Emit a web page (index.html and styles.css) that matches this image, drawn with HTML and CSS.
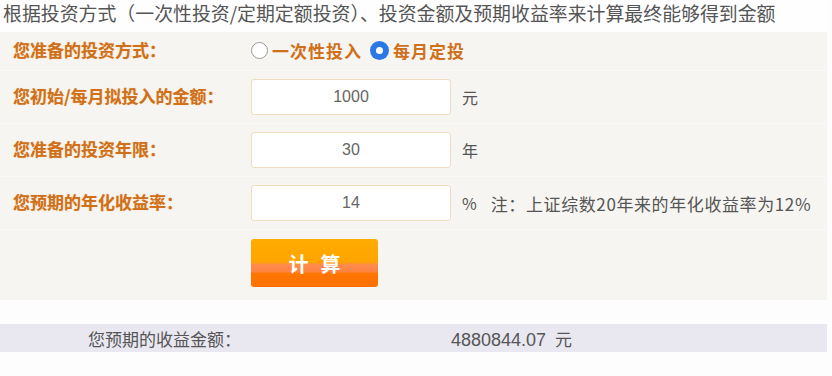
FILE: index.html
```html
<!DOCTYPE html>
<html lang="zh-CN">
<head>
<meta charset="utf-8">
<title>定投计算器</title>
<link rel="stylesheet" href="styles.css">
</head>
<body>
<div class="page">
  <p class="intro">根据投资方式（一次性投资/定期定额投资）、投资金额及预期收益率来计算最终能够得到金额</p>
  <div class="form">
    <div class="row row-mode">
      <div class="label">您准备的投资方式：</div>
      <div class="field">
        <span class="radio"></span><span class="opt">一次性投入</span>
        <span class="radio checked"></span><span class="opt">每月定投</span>
      </div>
    </div>
    <div class="row">
      <div class="label">您初始/每月拟投入的金额：</div>
      <div class="field"><div class="input">1000</div><span class="unit">元</span></div>
    </div>
    <div class="row">
      <div class="label">您准备的投资年限：</div>
      <div class="field"><div class="input">30</div><span class="unit">年</span></div>
    </div>
    <div class="row">
      <div class="label">您预期的年化收益率：</div>
      <div class="field"><div class="input">14</div><span class="unit">%</span><span class="note">注：上证综数20年来的年化收益率为12%</span></div>
    </div>
    <div class="row row-btn">
      <div class="label"></div>
      <div class="field"><button class="calc">计算</button></div>
    </div>
  </div>
  <div class="result">
    <div class="res-label">您预期的收益金额：</div>
    <div class="res-value">4880844.07<span class="res-unit">元</span></div>
  </div>
</div>
</body>
</html>
```
FILE: styles.css
```css
html, body {
  margin: 0;
  padding: 0;
  background: #fdfdfe;
}
body {
  font-family: "Noto Sans CJK SC", "Noto Sans", sans-serif;
  color: #555;
}
.page {
  width: 827px;
}
.intro {
  margin: 0;
  height: 31px;
  padding: 1px 0 0 3px;
  font-size: 18.9px;
  line-height: 24px;
  color: #555;
  white-space: nowrap;
  background: #fefefe;
}
.form {
  background: #f7f5f2;
  height: 268px;
}
.row {
  display: grid;
  grid-template-columns: 251px 1fr;
  align-items: center;
  height: 53px;
  border-bottom: 1px solid #faf9f7;
  box-sizing: border-box;
}
.row-mode {
  height: 39px;
}
.row-btn {
  height: 70px;
  align-items: start;
  border-bottom: none;
}
.row .label {
  padding-bottom: 3px;
}
.label {
  padding-left: 13px;
  font-size: 17px;
  font-weight: 700;
  color: #d0701a;
  white-space: nowrap;
  text-shadow: 0 0 1px rgba(230, 150, 60, 0.5);
}
.field {
  display: flex;
  align-items: center;
  white-space: nowrap;
}
.row-mode .field {
  padding-bottom: 2px;
}
.radio {
  width: 17px;
  height: 17px;
  border-radius: 50%;
  border: 1px solid #9a9a9a;
  background: #fff;
  box-sizing: border-box;
  margin-right: 4px;
  position: relative;
}
.radio.checked {
  width: 19px;
  height: 19px;
  border: none;
  background: #2b78e4;
  margin-left: 8px;
}
.radio.checked::after {
  content: "";
  position: absolute;
  left: 6px;
  top: 6px;
  width: 7px;
  height: 7px;
  border-radius: 50%;
  background: #fff;
}
.opt {
  font-size: 17px;
  font-weight: 700;
  color: #d0701a;
  letter-spacing: 1px;
}
.input {
  width: 200px;
  height: 36px;
  box-sizing: border-box;
  border: 1px solid #f0dcc0;
  border-radius: 3px;
  background: #fff;
  text-align: center;
  line-height: 34px;
  font-family: "Liberation Sans", Arial, sans-serif;
  font-size: 16px;
  color: #666;
}
.unit {
  margin-left: 11px;
  font-size: 16px;
  color: #555;
}
.note {
  margin-left: 14px;
  font-size: 17px;
  letter-spacing: 0.6px;
  color: #555;
}
.calc {
  margin-top: 9px;
  width: 127px;
  height: 48px;
  border: none;
  border-radius: 3px;
  background: linear-gradient(to bottom, #ffac00 0%, #ffa400 48%, #ff8a50 54%, #ff8340 68%, #ff7600 72%, #ff7000 100%);
  color: #fff;
  font-family: "Noto Sans CJK SC", sans-serif;
  font-size: 20px;
  font-weight: 700;
  letter-spacing: 12px;
  padding: 0 0 0 12px;
}
.result {
  margin-top: 24px;
  height: 28px;
  background: #e9e8f1;
  display: grid;
  grid-template-columns: 451px 1fr;
  align-items: center;
  font-size: 17px;
  color: #555;
}
.res-label {
  padding-left: 88px;
}
.res-value {
  font-family: "Liberation Sans", Arial, sans-serif;
  font-size: 18px;
}
.res-unit {
  margin-left: 9px;
  font-family: "Noto Sans CJK SC", sans-serif;
  font-size: 17px;
}
```
